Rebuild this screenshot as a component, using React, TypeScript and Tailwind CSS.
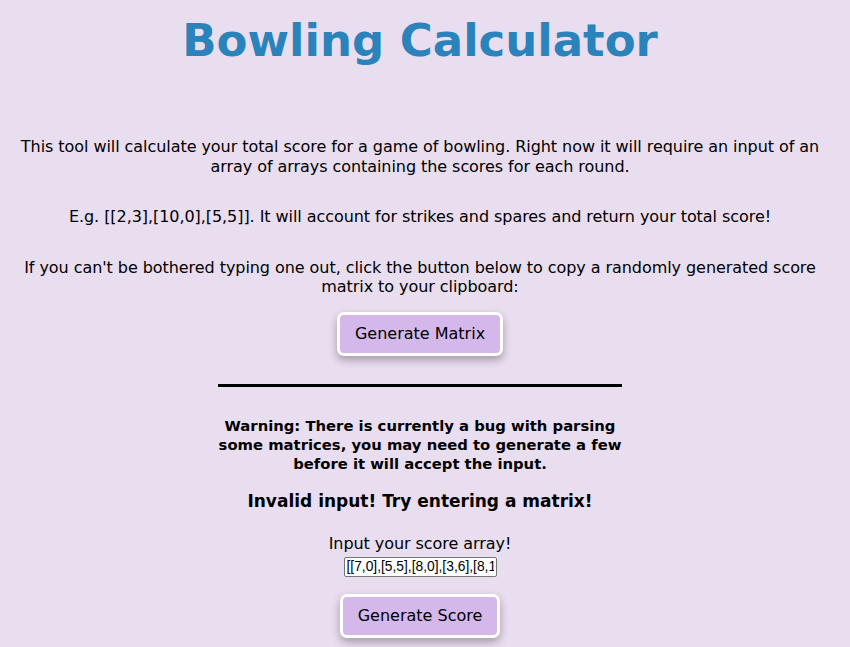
import React from "react";

export default function App() {
  return (
    <div className="min-h-screen bg-[#e9ddf0] pr-[10px] text-black font-['DejaVu_Sans',sans-serif] flex flex-col items-center text-center">
      <h1 className="mt-[12px] text-[45px] leading-[58px] font-bold text-[#2a84bb]">Bowling Calculator</h1>

      <p className="mt-[67px] px-2 text-[16px] leading-[19.5px] tracking-[-0.06px]">
        This tool will calculate your total score for a game of bowling. Right now it will require an input of an array of arrays containing the scores for each round.
      </p>
      <p className="mt-[31px] px-2 text-[16px] leading-[19.5px] tracking-[-0.06px]">
        E.g. [[2,3],[10,0],[5,5]]. It will account for strikes and spares and return your total score!
      </p>
      <p className="mt-[31px] px-2 text-[16px] leading-[19.5px] tracking-[-0.06px]">
        If you can't be bothered typing one out, click the button below to copy a randomly generated score matrix to your clipboard:
      </p>

      <button className="mt-[15.5px] h-[44px] w-[166px] rounded-[7px] border-[3px] border-white bg-[#d4b8ec] text-[16px] leading-[19.5px] text-black shadow-[0_4px_8px_rgba(0,0,0,0.3)]">
        Generate Matrix
      </button>

      <div className="mt-[27.5px] h-[3px] w-[404px] bg-black" />

      <p className="mt-[29.5px] w-[404px] text-[14.8px] leading-[19px] font-bold">
        Warning: There is currently a bug with parsing some matrices, you may need to generate a few before it will accept the input.
      </p>

      <h3 className="mt-[17.5px] text-[17px] leading-[21px] font-bold">Invalid input! Try entering a matrix!</h3>

      <label className="mt-[22px] block text-[16px] leading-[19.5px] tracking-[-0.06px]">Input your score array!</label>
      <input
        readOnly
        value="[[7,0],[5,5],[8,0],[3,6],[8,1],[10,0],[2,7],[6,4],[9,0],[10,10,10]]"
        className="mt-[3.5px] h-[20px] w-[153px] rounded-[2px] border border-[#767676] bg-white px-[2px] text-[13.8px] leading-[18px] text-black font-['Liberation_Sans',Arial,sans-serif] outline-none"
      />

      <button className="mt-[17px] h-[44px] w-[160px] rounded-[7px] border-[3px] border-white bg-[#d4b8ec] text-[16px] leading-[19.5px] text-black shadow-[0_4px_8px_rgba(0,0,0,0.3)]">
        Generate Score
      </button>
    </div>
  );
}
